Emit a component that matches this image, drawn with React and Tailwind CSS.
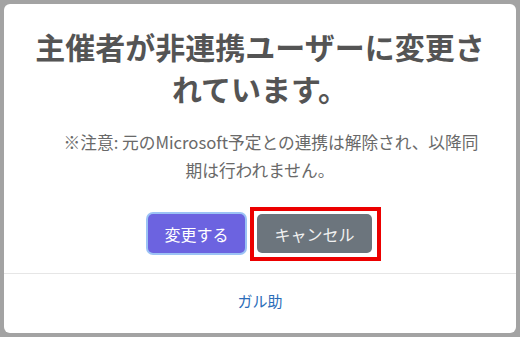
import React from 'react';

const font = { fontFamily: '"Noto Sans CJK JP", "Noto Sans", sans-serif' };

const ConfirmModal = () => {
    return (
        <div className="w-[520px] h-[337px] bg-[#a3a3a3] p-[4px] flex" style={font}>
            <div className="w-[512px] h-[329px] bg-white rounded-[6px] flex flex-col">
                <div className="flex-1 pt-[21px] px-[26px] flex flex-col">
                    <h2 className="text-[30px] leading-[42px] font-bold text-center text-[#545454]">
                        主催者が非連携ユーザーに変更されています。
                    </h2>
                    <p className="mt-[19px] text-[16.7px] leading-[28px] text-center text-[#696969] whitespace-nowrap">
                        <span className="pl-[22px]">※注意: 元のMicrosoft予定との連携は解除され、以降同</span>
                        <br />
                        期は行われません。
                    </p>
                    <div className="mt-[30px] flex justify-center gap-[12px]">
                        <button className="w-[97px] h-[39px] rounded-[5px] bg-[#6c63e0] text-white text-[16px] ring-2 ring-[#9cc3f5]">
                            変更する
                        </button>
                        <span className="relative flex">
                            <button className="w-[115px] h-[39px] rounded-[5px] bg-[#6c757d] text-[#f1f1f1] text-[16px]">
                                キャンセル
                            </button>
                            <span className="absolute -left-[7px] -right-[9px] -top-[7px] -bottom-[8px] border-[4px] border-[#ec0000] pointer-events-none" />
                        </span>
                    </div>
                </div>
                <div className="h-[60px] border-t border-[#e6e6e6] pt-[14px] text-center">
                    <a className="text-[15px] leading-[24px] text-[#2a6cb8]">ガル助</a>
                </div>
            </div>
        </div>
    );
};

export default function App() {
    return <ConfirmModal />;
}
